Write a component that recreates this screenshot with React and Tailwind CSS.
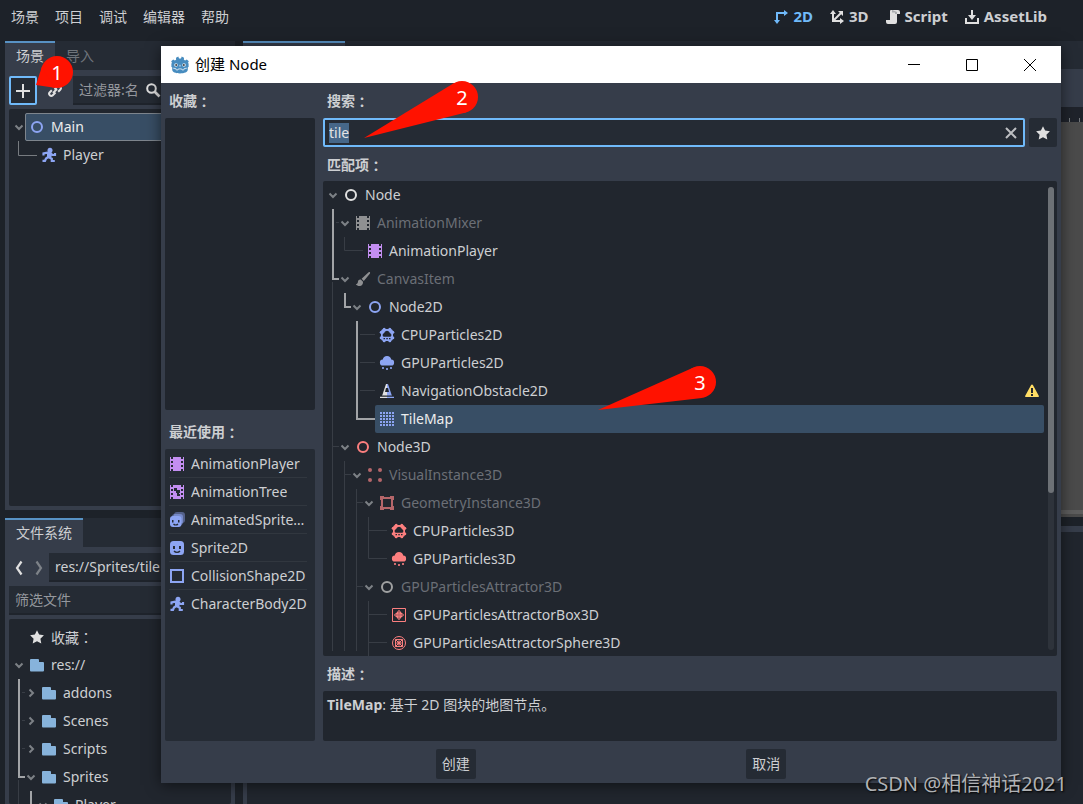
import { useEffect, useRef } from 'react';

const BLUE = '#8da5f3';
const RED = '#fc7f7f';
const PURPLE = '#c38ef1';
const WHITE = '#e0e0e0';

const recentItems = [
    { name: 'AnimationPlayer', icon: 'film', color: PURPLE },
    { name: 'AnimationTree', icon: 'filmTree', color: PURPLE },
    { name: 'AnimatedSprite2D', icon: 'sprites', color: BLUE },
    { name: 'Sprite2D', icon: 'sprite', color: BLUE },
    { name: 'CollisionShape2D', icon: 'square', color: BLUE },
    { name: 'CharacterBody2D', icon: 'runner', color: BLUE }
];

const matches = [
    { name: 'Node', depth: 0, icon: 'ring', color: WHITE, arrow: 'down' },
    { name: 'AnimationMixer', depth: 1, icon: 'film', color: '#8f9092', arrow: 'down', dim: true },
    { name: 'AnimationPlayer', depth: 2, icon: 'film', color: PURPLE },
    { name: 'CanvasItem', depth: 1, icon: 'brush', color: '#8f9092', arrow: 'down', dim: true },
    { name: 'Node2D', depth: 2, icon: 'ring', color: BLUE, arrow: 'down' },
    { name: 'CPUParticles2D', depth: 3, icon: 'cpu', color: BLUE },
    { name: 'GPUParticles2D', depth: 3, icon: 'cloud', color: BLUE },
    { name: 'NavigationObstacle2D', depth: 3, icon: 'cone', color: BLUE, warning: true },
    { name: 'TileMap', depth: 3, icon: 'grid', color: BLUE, selected: true },
    { name: 'Node3D', depth: 1, icon: 'ring', color: RED, arrow: 'down' },
    { name: 'VisualInstance3D', depth: 2, icon: 'dots', color: '#b5666a', arrow: 'down', dim: true },
    { name: 'GeometryInstance3D', depth: 3, icon: 'frame', color: '#b5666a', arrow: 'down', dim: true },
    { name: 'CPUParticles3D', depth: 4, icon: 'cpu', color: RED },
    { name: 'GPUParticles3D', depth: 4, icon: 'cloud', color: RED },
    { name: 'GPUParticlesAttractor3D', depth: 3, icon: 'ring', color: '#a0a1a2', arrow: 'down', dim: true },
    { name: 'GPUParticlesAttractorBox3D', depth: 4, icon: 'attractorBox', color: RED },
    { name: 'GPUParticlesAttractorSphere3D', depth: 4, icon: 'attractorSphere', color: RED }
];

const files = [
    { name: '收藏', colon: true, depth: 0, icon: 'star', color: WHITE },
    { name: 'res://', depth: 0, icon: 'folder', color: '#87b3db', arrow: 'down' },
    { name: 'addons', depth: 1, icon: 'folder', color: '#87b3db', arrow: 'right' },
    { name: 'Scenes', depth: 1, icon: 'folder', color: '#87b3db', arrow: 'right' },
    { name: 'Scripts', depth: 1, icon: 'folder', color: '#87b3db', arrow: 'right' },
    { name: 'Sprites', depth: 1, icon: 'folder', color: '#87b3db', arrow: 'down' },
    { name: 'Player', depth: 2, icon: 'folder', color: '#87b3db', arrow: 'down' }
];

const filmPath = 'M1 1v14h1v-2h2v2h8v-2h2v2h1V1h-1v2h-2V1H4v2H2V1zm1 4h2v2H2zm10 0h2v2h-2zM2 9h2v2H2zm10 0h2v2h-2z';
const cloudPath = 'M8 1a4.3 4.3 0 0 0-4.2 3.6A3 3 0 0 0 4 10.6h8a3 3 0 0 0 .2-6A4.3 4.3 0 0 0 8 1z';

const icons = {
    ring: <circle cx="8" cy="8" r="5" fill="none" stroke="currentColor" strokeWidth="2" />,
    film: <path d={filmPath} fillRule="evenodd" />,
    filmTree: (
        <>
            <path d={filmPath} fillRule="evenodd" />
            <path d="M5 4h3v2h3v3h-1v1h1v2H8v-3H7V7H5z" fill="#252b34" />
        </>
    ),
    brush: (
        <>
            <path d="M14.600 1.100a1.100 1.100 0 0 0-1 .2L6.600 7.800l2.200 2.200 6-7.200c.5-.6.4-1.400-.2-1.700z" />
            <path d="M5.800 8.600C3.600 8.400 3 9.800 2.800 11.400c-.1.800-.6 1.400-2 1.600 1 1.700 2.800 2.300 4.400 2 2-.4 3-2.200 2.800-4.300z" />
        </>
    ),
    cpu: (
        <>
            <rect x="2" y="2" width="12" height="12" rx="3" />
            <circle cx="5.200" cy="2.200" r="1.500" />
            <circle cx="10.800" cy="2.200" r="1.500" />
            <circle cx="5.200" cy="13.800" r="1.500" />
            <circle cx="10.800" cy="13.800" r="1.500" />
            <circle cx="2.200" cy="5.200" r="1.500" />
            <circle cx="2.200" cy="10.800" r="1.500" />
            <circle cx="13.800" cy="5.200" r="1.500" />
            <circle cx="13.800" cy="10.800" r="1.500" />
            <path d="M8 3.800a3.200 3.200 0 0 0-3 2.400 1.900 1.900 0 0 0-.2 3.600h6.400a1.900 1.900 0 0 0-.2-3.600 3.200 3.200 0 0 0-3-2.400z" fill="#21262e" />
            <path d="M4.500 11H6v1.200H4.500zM7.300 11h1.500v1.200H7.300zM10 11h1.500v1.200H10z" fill="#21262e" />
        </>
    ),
    cloud: (
        <>
            <path d={cloudPath} />
            <path d="M3 12h2v2H3zM7 13h2v2H7zM11 12h2v2h-2z" opacity=".8" />
        </>
    ),
    cone: (
        <>
            <path d="M7 1h1v12H3zM1 13.500h7V15H1z" fill="#e0e0e0" />
            <path d="M8 1h1l4 12H8zM8 13.500h7V15H8z" />
            <path d="M7 5h2l1 4H6zM1 12.600h14v.9H1z" fill="#21262e" />
        </>
    ),
    grid: [1, 4, 7, 10, 13].map(y => (
        <path key={y} d="M1 0h2v2H1zM4 0h2v2H4zM7 0h2v2H7zM10 0h2v2h-2zM13 0h2v2h-2z" transform={`translate(0 ${y})`} />
    )),
    dots: (
        <>
            <circle cx="3" cy="3" r="2" />
            <circle cx="13" cy="3" r="2" />
            <circle cx="3" cy="13" r="2" />
            <circle cx="13" cy="13" r="2" />
        </>
    ),
    frame: (
        <>
            <path d="M3 3h10v10H3z" fill="none" stroke="currentColor" strokeWidth="2" />
            <path d="M1 1h4v3H4v1H1zM11 1h4v4h-3V4h-1zM1 11h3v1h1v3H1zM12 11h3v4h-4v-3h1z" />
        </>
    ),
    attractorBox: (
        <g fill="none" stroke="currentColor">
            <path d="M1.500 1.500h13v13h-13z" />
            <circle cx="8" cy="8" r="3" />
            <circle cx="8" cy="8" r="1" />
            <ellipse cx="8" cy="8" rx="4.500" ry="1.800" />
            <ellipse cx="8" cy="8" rx="1.800" ry="4.500" />
        </g>
    ),
    attractorSphere: (
        <g fill="none" stroke="currentColor">
            <circle cx="8" cy="8" r="6.500" />
            <circle cx="8" cy="8" r="2" />
            <path d="M4.500 4.500h7v7h-7zM4.500 4.500l7 7M11.500 4.500l-7 7" />
        </g>
    ),
    sprite: (
        <>
            <rect x="1" y="1" width="14" height="14" rx="3.500" />
            <path d="M4 6h2v3H4zM10 6h2v3h-2z" fill="#252b34" />
            <path d="M5 11c1.500 1.800 4.500 1.800 6 0" fill="none" stroke="#252b34" strokeWidth="1.300" />
        </>
    ),
    sprites: (
        <>
            <rect x="5" y="0" width="11" height="11" rx="3" opacity=".45" />
            <rect x="3" y="2" width="11" height="11" rx="3" opacity=".6" />
            <rect x="1" y="4" width="11.500" height="11" rx="3" />
            <path d="M3 8h1.500v2.500H3zM9 8h1.500v2.500H9z" fill="#252b34" />
            <path d="M4.500 12c1.200 1.300 3.300 1.300 4.500 0" fill="none" stroke="#252b34" strokeWidth="1.200" />
        </>
    ),
    square: <path d="M2 2h12v12H2z" fill="none" stroke="currentColor" strokeWidth="2" />,
    runner: (
        <>
            <circle cx="9" cy="3.200" r="2.500" />
            <path
                d="M2.500 8.500V6.500l4-.8h2.500L11.500 8h2.500V6M8 6l-.8 4 3.600 1.800V14h3M7.200 10L5 11.500 4 13.800H1.500"
                fill="none"
                stroke="currentColor"
                strokeWidth="2.200"
            />
            <path d="M6 5h4l1 3-1 3-4-.5z" />
        </>
    ),
    star: <path d="M8 1.200l2.100 4.400 4.800.7-3.500 3.400.9 4.900L8 12.200l-4.300 2.400.9-4.900L1.100 6.300l4.800-.7z" />,
    folder: <path d="M2 2a1 1 0 0 0-1 1v10.500a1 1 0 0 0 1 1h12a1 1 0 0 0 1-1V6a1 1 0 0 0-1-1h-4V3a1 1 0 0 0-1-1z" />,
    plus: <path d="M7 1h2v6h6v2H9v6H7V9H1V7h6z" />,
    link: (
        <g fill="none" stroke="currentColor" strokeWidth="2">
            <path d="M7.500 6.500l2.700-2.700a2.100 2.100 0 0 1 3 3l-2 2M8.500 9.500l-2.700 2.700a2.100 2.100 0 0 1-3-3l2-2M6 10l4-4" />
        </g>
    ),
    search: (
        <g fill="none" stroke="currentColor" strokeWidth="2">
            <circle cx="6.500" cy="6.500" r="4.300" />
            <path d="M9.500 9.500l5 5" strokeWidth="2.600" />
        </g>
    ),
    close: <path d="M3 3l10 10M13 3L3 13" fill="none" stroke="currentColor" strokeWidth="2" />,
    back: <path d="M10.500 1.500L6 8l4.500 6.500" fill="none" stroke="currentColor" strokeWidth="2.200" />,
    forward: <path d="M5.500 1.500L10 8l-4.500 6.500" fill="none" stroke="currentColor" strokeWidth="2.200" />,
    warning: (
        <>
            <path d="M8 1.500a1 1 0 0 0-.9.5l-6 11a1 1 0 0 0 .4 1h13a1 1 0 0 0 .4-1L8.900 2a1 1 0 0 0-.9-.5z" />
            <path d="M7 5h2v5H7zM7 11h2v2H7z" fill="#21262e" />
        </>
    ),
    axes2d: (
        <>
            <path d="M4 12V4h8" fill="none" stroke="currentColor" strokeWidth="2" />
            <path d="M1 11h6l-3 4zM11 1l4 3-4 3z" />
        </>
    ),
    axes3d: (
        <>
            <path d="M4 4v8h8M4 12l8-8" fill="none" stroke="currentColor" strokeWidth="2" />
            <path d="M1 5l3-4 3 4zM11 9l4 3-4 3zM9 2h5v5z" />
        </>
    ),
    script: (
        <>
            <path d="M6 1a1 1 0 0 0-1 1v9H1v2a2 2 0 0 0 2 2h7a2 2 0 0 0 2-2V5h3V3a2 2 0 0 0-2-2z" />
            <path d="M7 1v2.500h3V5h2V3" fill="#a8abae" />
        </>
    ),
    download: (
        <>
            <path d="M7 1h2v5h3L8 11 4 6h3z" />
            <path d="M2 9v5h12V9" fill="none" stroke="currentColor" strokeWidth="2" />
        </>
    ),
    clapper: <path d="M1 2l13-1v3L1 5zM1 6h14v9H1z" />,
    eye: <path d="M8 3C4 3 1.500 6 1 8c.5 2 3 5 7 5s6.500-3 7-5c-.5-2-3-5-7-5zm0 2a3 3 0 1 1 0 6 3 3 0 0 1 0-6zm0 2a1 1 0 1 0 0 2 1 1 0 0 0 0-2z" />,
    more: (
        <>
            <circle cx="8" cy="3" r="1.500" />
            <circle cx="8" cy="8" r="1.500" />
            <circle cx="8" cy="13" r="1.500" />
        </>
    )
};

function Icon({ name, color }) {
    return (
        <svg viewBox="0 0 16 16" fill="currentColor" color={color || WHITE} className="w-4 h-4 shrink-0" aria-hidden="true">
            {icons[name]}
        </svg>
    );
}

function GodotLogo() {
    return (
        <svg viewBox="0 0 18 18" className="w-[18px] h-[18px] shrink-0" aria-hidden="true">
            <path
                d="M5 1.800L7.300.6l.7 2h2l.7-2L13 1.800l-.1 2 1.300.8 1.600-1.200L17.800 5.200 17 7l.6.500v3.500l-.8.300v2.200c0 2.600-3.400 3.900-7.800 3.900s-7.800-1.300-7.800-3.900v-2.200L.4 11V7.500L1 7 .2 5.200l2-1.800 1.600 1.200 1.300-.8z"
                fill="#478cbf"
            />
            <circle cx="5" cy="9" r="1.800" fill="#dfeaf3" />
            <circle cx="13" cy="9" r="1.800" fill="#dfeaf3" />
            <circle cx="5.200" cy="9.100" r="1" fill="#414042" />
            <circle cx="12.800" cy="9.100" r="1" fill="#414042" />
            <path d="M9 8.800v1.800M2.200 12.200l2.600.4.4 1.300h1.800l.4-1h3.200l.4 1h1.800l.4-1.300 2.600-.4" fill="none" stroke="#dfeaf3" strokeWidth=".9" />
        </svg>
    );
}

function Colon() {
    return <span className="font-['Noto_Sans_CJK_JP',sans-serif]">：</span>;
}

function SectionLabel({ children }) {
    return <h2 className="h-[27px] shrink-0 px-1 flex items-center font-bold">{children}<Colon /></h2>;
}

function Arrow({ dir }) {
    return (
        <svg viewBox="0 0 16 28" className="w-4 h-7 shrink-0" aria-hidden="true">
            {dir && (
                <path
                    d={dir === 'down' ? 'M6.500 12.500L10 16l3.500-3.500' : 'M8.500 10.500L12 14l-3.500 3.500'}
                    fill="none"
                    stroke="#7d8186"
                    strokeWidth="2"
                />
            )}
        </svg>
    );
}

function TreeRow({ item, outlined, children }) {
    let look = 'text-[#cdcfd2]';
    if (item.dim) look = 'text-[#6b6f76]';
    if (item.selected) look = 'bg-[#384e65] text-[#eceded]';
    return (
        <li className="flex h-7" style={{ paddingLeft: item.depth * 12 }}>
            <Arrow dir={item.arrow} />
            <div className={`flex-1 min-w-0 flex items-center gap-1.5 px-1 rounded-xs ${look} ${outlined ? 'outline -outline-offset-1 outline-[#7e858d]' : ''}`}>
                <Icon name={item.icon} color={item.color} />
                <span className="whitespace-nowrap">{item.name}{item.colon && <Colon />}</span>
                {item.warning && <span className="ml-auto"><Icon name="warning" color="#ffdd65" /></span>}
                {children}
            </div>
        </li>
    );
}

// thin = sibling guides, bold = path to the selected item
function Guides({ thin, bold, thinColor = '#383d45' }) {
    return (
        <svg className="absolute left-0 top-0 w-20 h-full pointer-events-none" fill="none" aria-hidden="true">
            <path d={thin} stroke={thinColor} />
            {bold && <path d={bold} stroke="#a2a4a7" strokeWidth="2" />}
        </svg>
    );
}

function MenuBar() {
    return (
        <header className="flex items-center justify-between pt-1 pb-[11px] pl-[3px] pr-7">
            <nav className="flex">
                {['场景', '项目', '调试', '编辑器', '帮助'].map(label => (
                    <button key={label} type="button" className="h-[26px] px-2">{label}</button>
                ))}
            </nav>
            <div className="flex text-[15px] font-bold">
                {[['2D', 'axes2d'], ['3D', 'axes3d'], ['Script', 'script'], ['AssetLib', 'download']].map(([label, icon]) => (
                    <button
                        key={label}
                        type="button"
                        className={`h-[26px] px-2 flex items-center gap-1 ${label === '2D' ? 'text-[#70bafa]' : ''}`}
                    >
                        <Icon name={icon} color={label === '2D' ? '#70bafa' : WHITE} />
                        {label}
                    </button>
                ))}
            </div>
        </header>
    );
}

function DockTab({ active, children }) {
    return (
        <button
            type="button"
            className={`px-[11px] pb-0.5 border-t-2 ${active ? 'border-[#5892c4] bg-[#363d4a]' : 'border-transparent text-[#6f747b]'}`}
        >
            {children}
        </button>
    );
}

function SceneDock() {
    return (
        <section className="h-[469px] shrink-0 flex flex-col bg-[#363d4a]">
            <div className="flex h-[29px] shrink-0 bg-[#252b34]">
                <DockTab active>场景</DockTab>
                <DockTab>导入</DockTab>
            </div>
            <div className="flex flex-1 flex-col gap-1 px-1 pt-1.5 pb-1">
                <div className="flex gap-1 h-[29px]">
                    <button type="button" aria-label="+" className="w-7 shrink-0 flex items-center justify-center border-2 border-[#70bafa] rounded-xs bg-[#252b34]">
                        <Icon name="plus" />
                    </button>
                    <button type="button" aria-label="link" className="w-7 shrink-0 flex items-center justify-center">
                        <Icon name="link" />
                    </button>
                    <div className="flex flex-1 min-w-0 items-center bg-[#252b34] border-b-2 border-[#1f242c] px-1.5">
                        <input aria-label="过滤器" placeholder="过滤器:名" className="flex-1 min-w-0 bg-transparent outline-none placeholder:text-[#94979d]" />
                        <Icon name="search" />
                    </div>
                    <button type="button" aria-label="script" className="w-7 shrink-0 flex items-center justify-center"><Icon name="script" /></button>
                    <button type="button" aria-label="more" className="w-7 shrink-0 flex items-center justify-center"><Icon name="more" /></button>
                </div>
                <div className="flex-1 bg-[#21262e] rounded-xs pt-1">
                    <div className="relative">
                        <Guides thin="M9.500 28v14.500H28" thinColor="#777b80" />
                        <ul>
                            <TreeRow item={{ name: 'Main', depth: 0, icon: 'ring', color: BLUE, arrow: 'down', selected: true }} outlined />
                            <TreeRow item={{ name: 'Player', depth: 1, icon: 'runner', color: BLUE }}>
                                <span className="ml-auto flex gap-2">
                                    <Icon name="clapper" color="#8f9296" />
                                    <Icon name="script" />
                                    <Icon name="eye" />
                                </span>
                            </TreeRow>
                        </ul>
                    </div>
                </div>
            </div>
        </section>
    );
}

function FileDock() {
    return (
        <section className="flex-1 min-h-0 flex flex-col bg-[#363d4a]">
            <div className="flex h-[29px] shrink-0 bg-[#252b34]">
                <DockTab active>文件系统</DockTab>
            </div>
            <div className="flex flex-1 min-h-0 flex-col gap-1 px-1 pt-1.5">
                <div className="flex h-[29px] shrink-0">
                    <button type="button" aria-label="back" className="w-5 flex items-center justify-center"><Icon name="back" /></button>
                    <button type="button" aria-label="forward" className="w-5 flex items-center justify-center"><Icon name="forward" color="#7d8288" /></button>
                    <input
                        aria-label="路径"
                        defaultValue="res://Sprites/tile"
                        className="flex-1 min-w-0 px-1.5 bg-[#252b34] border-b-2 border-[#1f242c] outline-none"
                    />
                </div>
                <input
                    aria-label="筛选文件"
                    placeholder="筛选文件"
                    className="h-[29px] shrink-0 px-1.5 bg-[#252b34] border-b-2 border-[#1f242c] outline-none placeholder:text-[#94979d]"
                />
                <div className="flex-1 min-h-0 overflow-hidden bg-[#21262e] rounded-xs pt-1">
                    <div className="relative">
                        <Guides
                            thin="M13 69.500h3M13 97.500h3M13 125.500h3M9.500 157v60"
                            bold="M10 56v98h6M22 168v40"
                        />
                        <ul>
                            {files.map(item => <TreeRow key={item.name} item={item} />)}
                        </ul>
                    </div>
                </div>
            </div>
        </section>
    );
}

function Workspace() {
    return (
        <main className="flex-1 min-w-0 flex flex-col">
            <div className="flex h-7 bg-[#252b34]">
                <div className="w-[102px] border-t-2 border-[#5892c4] bg-[#363d4a]" />
            </div>
            <div className="h-[38px] bg-[#363d4a]" />
            <div className="h-[15px] flex items-end justify-end gap-[9px] pr-[3px] bg-[#1f232b]">
                <div className="w-px h-1 bg-[#73777c]" />
                <div className="w-px h-1 bg-[#73777c]" />
            </div>
            <div className="flex-1 flex flex-col justify-end pb-[3px] bg-[#4b4b4b]">
                <div className="h-1 bg-[#5e5e5e]" />
            </div>
            <div className="h-[278px] mt-[9px] bg-[#21262e] border-4 border-b-0 border-r-0 border-t-[6px] border-[#363d4a]" />
        </main>
    );
}

function CreateDialog() {
    const searchRef = useRef(null);

    useEffect(() => {
        searchRef.current.focus();
        searchRef.current.select();
    }, []);

    return (
        <div role="dialog" aria-labelledby="dialog-title" className="absolute left-[161px] right-[22px] top-[46px] bottom-[21px] flex flex-col bg-[#363d4a] shadow-[0_2px_14px_rgba(0,0,0,0.55)]">
            <div className="flex h-[37px] shrink-0 items-stretch pr-0.5 bg-white text-black">
                <div className="flex flex-1 items-center gap-1.5 pl-2.5">
                    <GodotLogo />
                    <h1 id="dialog-title" className="text-[15px]">创建 Node</h1>
                </div>
                {['M0 5.500h12', 'M.5.5h11v11H.5z', 'M0 0l12 12M12 0L0 12'].map((d, i) => (
                    <button key={d} type="button" aria-label={['minimize', 'maximize', 'close'][i]} className="w-[58px] flex items-center justify-center">
                        <svg viewBox="0 0 12 12" className="w-3 h-3" fill="none" stroke="#000"><path d={d} /></svg>
                    </button>
                ))}
            </div>

            <div className="flex flex-1 min-h-0 gap-2 px-1 pt-1">
                {/* Favorites and recent */}
                <div className="w-[150px] shrink-0 flex flex-col gap-2">
                    <div className="flex flex-1 flex-col gap-1">
                        <SectionLabel>收藏</SectionLabel>
                        <div className="flex-1 bg-[#21262e] rounded-xs" />
                    </div>
                    <div className="flex flex-1 flex-col gap-1">
                        <SectionLabel>最近使用</SectionLabel>
                        <ul className="flex-1 pl-1 pr-2 pt-px bg-[#252b34] rounded-xs">
                            {recentItems.map(item => (
                                <li key={item.name} className="h-7 flex items-center gap-1.5 border-b border-[#31373f] last:border-transparent">
                                    <Icon name={item.icon} color={item.color} />
                                    <span className="truncate">{item.name}</span>
                                </li>
                            ))}
                        </ul>
                    </div>
                </div>

                {/* Search and matches */}
                <div className="flex-1 min-w-0 flex flex-col">
                    <label htmlFor="node-search" className="h-[27px] shrink-0 px-1 flex items-center font-bold">搜索<Colon /></label>
                    <div className="flex gap-1 mt-1 h-[29px] shrink-0">
                        <div className="flex flex-1 items-center border-2 border-[#70bafa] rounded-xs bg-[#252b34] px-1">
                            <input
                                id="node-search"
                                ref={searchRef}
                                defaultValue="tile"
                                className="flex-1 min-w-0 bg-transparent outline-none text-[#e3e4e5] selection:bg-[#466789] selection:text-[#e3e4e5]"
                            />
                            <button type="button" aria-label="clear"><Icon name="close" color="#bcbec1" /></button>
                        </div>
                        <button type="button" aria-label="favorite" className="w-7 flex items-center justify-center bg-[#252b34] rounded-xs">
                            <Icon name="star" />
                        </button>
                    </div>
                    <div className="mt-1"><SectionLabel>匹配项</SectionLabel></div>
                    <div className="mt-[3px] flex-1 min-h-0 flex overflow-hidden bg-[#21262e] rounded-xs">
                        <div className="relative flex-1 overflow-hidden">
                            <Guides
                                thin="M13 41.500h3M21.500 56v13.500H40M9.500 101v369M9.500 265.500H16M37 153.500h15M37 181.500h15M37 209.500h15M21.500 280v190M21.500 293.500H28M33.500 308v162M33.500 321.500H40M33.500 405.500H40M45.500 336v41.500H64M45.500 349.500H64M45.500 420v55M45.500 433.500H64M45.500 461.500H64"
                                bold="M10 28v70h6M22 112v14h6M34 140v98h18"
                            />
                            <ul>
                                {matches.map(item => <TreeRow key={item.name} item={item} />)}
                            </ul>
                        </div>
                        <div className="w-1.5 ml-1 mr-[3px] my-1.5 shrink-0 bg-[#2e333b] rounded-full">
                            <div className="h-[66%] bg-[#6d7176] rounded-full" />
                        </div>
                    </div>
                    <div className="my-1"><SectionLabel>描述</SectionLabel></div>
                    <p className="h-[50px] shrink-0 px-1 pt-1 bg-[#21262e] rounded-xs">
                        <b>TileMap</b>: 基于 2D 图块的地图节点。
                    </p>
                </div>
            </div>

            <div className="flex justify-evenly px-1 pt-2 pb-1">
                <button type="button" className="h-[30px] px-1.5 bg-[#252b34] rounded-xs">创建</button>
                <button type="button" className="h-[30px] px-1.5 bg-[#252b34] rounded-xs">取消</button>
            </div>
        </div>
    );
}

// Pin number: a disc with a tail that runs to the tip
function Callout({ number, x, y, tipX, tipY }) {
    const r = 16;
    const angle = Math.atan2(y - tipY, x - tipX);
    const dist = Math.hypot(x - tipX, y - tipY);
    const spread = Math.asin(r / dist);
    const len = Math.sqrt(dist * dist - r * r);
    const points = [angle - spread, angle + spread].map(a => `${tipX + len * Math.cos(a)},${tipY + len * Math.sin(a)}`);
    return (
        <g fill="#ff1200">
            <circle cx={x} cy={y} r={r} />
            <polygon points={`${tipX},${tipY} ${points.join(' ')}`} />
            <text x={x} y={y + 8} textAnchor="middle" fill="#fff" fontSize="20">{number}</text>
        </g>
    );
}

export default function App() {
    return (
        <div className="relative h-screen overflow-hidden flex flex-col bg-[#1d2229] text-[#cdcfd2] text-sm font-['Noto_Sans','Noto_Sans_CJK_SC',sans-serif]">
            <MenuBar />
            <div className="flex flex-1 min-h-0 gap-2 pl-[5px]">
                <div className="w-[230px] shrink-0 flex flex-col gap-2">
                    <SceneDock />
                    <FileDock />
                </div>
                <Workspace />
            </div>

            <CreateDialog />

            <svg className="absolute inset-0 w-full h-full pointer-events-none">
                <Callout number="1" x={57} y={72} tipX={36} tipY={85} />
                <Callout number="2" x={462} y={97} tipX={364} tipY={138} />
                <Callout number="3" x={700} y={382} tipX={598} tipY={410} />
            </svg>
            <p className="absolute right-4 bottom-1.5 text-xl text-[#b0b2b5] [text-shadow:1px_1px_2px_#000]">CSDN @相信神话2021</p>
        </div>
    );
}
